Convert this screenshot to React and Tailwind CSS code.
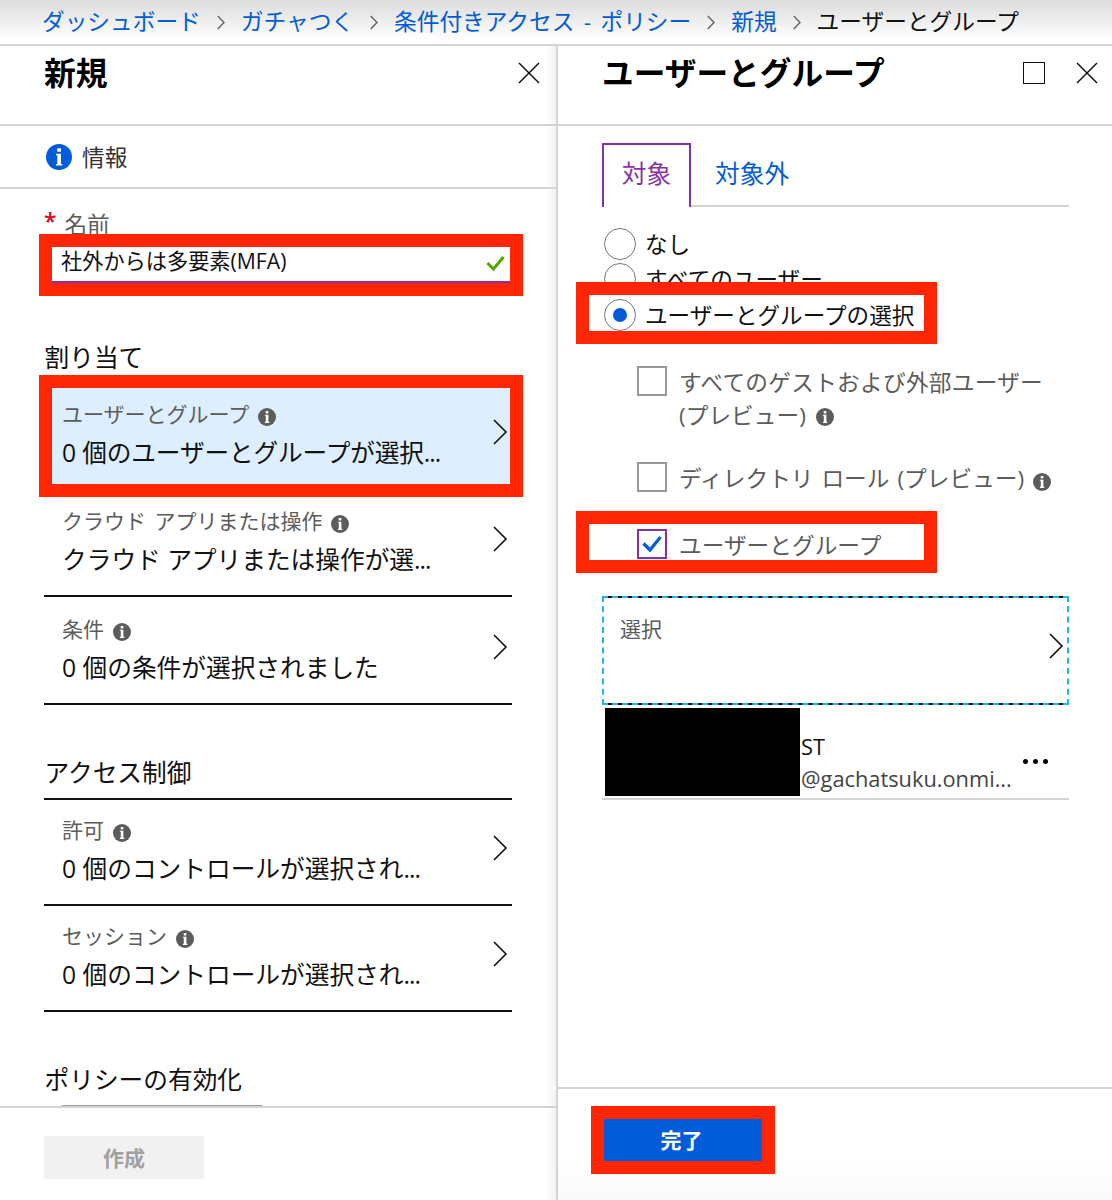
import React from "react";

const Chevron = ({ className = "" }) => (
  <svg className={className} width="15" height="26" viewBox="0 0 15 26" fill="none" stroke="#111" strokeWidth="1.6">
    <path d="M1 1 L13 13 L1 25" />
  </svg>
);

const Close = () => (
  <svg width="22" height="22" viewBox="0 0 22 22" fill="none" stroke="#111" strokeWidth="1.5">
    <path d="M1 1 L21 21 M21 1 L1 21" />
  </svg>
);

const Info = ({ size = 18, color = "#5c5c5c" }) => (
  <svg className="shrink-0" width={size} height={size} viewBox="0 0 18 18">
    <circle cx="9" cy="9" r="9" fill={color} />
    <rect x="7.7" y="3" width="2.7" height="2.4" rx="0.6" fill="#fff" />
    <path d="M6.9 6.7h3.5v7.1h0.9v1.1H6.9v-1.1h0.9V7.8H6.9z" fill="#fff" />
  </svg>
);

const Crumb = ({ children, last }) => (
  <span className={`whitespace-nowrap [word-spacing:3.5px] ${last ? "text-[#111]" : "text-[#015cda]"}`}>{children}</span>
);

const CrumbArrow = () => (
  <svg className="mx-4 shrink-0" width="8" height="15" viewBox="0 0 8 15" fill="none" stroke="#666" strokeWidth="1.5">
    <path d="M0.8 1 L7 7.5 L0.8 14" />
  </svg>
);

const Row = ({ label, value, height, active, more }) => (
  <div className={`flex shrink-0 border-b-2 border-[#111] ${height} ${active ? "bg-[#dceeff]" : ""}`}>
    <div className="flex flex-1 flex-col justify-end pb-[15px] pl-[18px]">
      <div className="flex h-9 items-center gap-[9px] text-[21px] leading-9 text-[#5c5c5c] [word-spacing:3px]">
        <span className="-mt-[2px]">{label}</span>
        <span className="mt-1"><Info /></span>
      </div>
      <div className="h-10 whitespace-nowrap text-[24.7px] leading-10 text-[#111]">
        <span className={active ? "tracking-[-0.15px]" : ""}>{value}</span>
        {more && <span className="tracking-[-1px]">...</span>}
      </div>
    </div>
    <div className="flex items-end pb-[43px] pr-1">
      <Chevron />
    </div>
  </div>
);

const Section = ({ children, className }) => (
  <h2 className={`shrink-0 pl-[0.5px] text-[24.7px] leading-9 text-[#111] ${className}`}>{children}</h2>
);

const Radio = ({ children, checked }) => (
  <label className="flex h-[35.5px] items-center gap-[9px] text-[22.6px] leading-9 text-[#111]">
    <span className="flex h-8 w-8 shrink-0 items-center justify-center rounded-full border-[1.5px] border-[#777] bg-white">
      {checked && <span className="h-[14px] w-[14px] rounded-full bg-[#015cda]" />}
    </span>
    <span className="pt-[2px]">{children}</span>
  </label>
);

const Check = ({ children, checked, className }) => (
  <label className={`flex items-start gap-3 text-[22.7px] leading-[33px] text-[#5c5c5c] ${className}`}>
    <span
      className={`flex h-[30px] w-[30px] shrink-0 items-center justify-center border-2 bg-white ${
        checked ? "border-[#8930a8]" : "border-[#999]"
      }`}
    >
      {checked && (
        <svg width="20" height="18" viewBox="0 0 20 18" fill="none" stroke="#015cda" strokeWidth="3.2">
          <path d="M1.5 8.5 L8 15 L18.5 2" />
        </svg>
      )}
    </span>
    <span className="whitespace-nowrap">{children}</span>
  </label>
);

const Mark = ({ className }) => (
  <div className={`pointer-events-none absolute border-[13px] border-[#ff2703] ${className}`} />
);

export default function App() {
  return (
    <div className="relative flex h-[1200px] w-[1112px] flex-col overflow-hidden bg-white font-['Open_Sans','Noto_Sans_CJK_JP',sans-serif]">
      <nav className="flex h-[46px] shrink-0 items-center border-b-2 border-[#d4d4d4] bg-linear-to-b from-[#dcdcdc] to-white to-90% pl-[42px] text-[22.7px] leading-[44px]">
        <Crumb>ダッシュボード</Crumb>
        <CrumbArrow />
        <Crumb>ガチャつく</Crumb>
        <CrumbArrow />
        <Crumb>条件付きアクセス - ポリシー</Crumb>
        <CrumbArrow />
        <Crumb>新規</Crumb>
        <CrumbArrow />
        <Crumb last>ユーザーとグループ</Crumb>
      </nav>

      <div className="flex min-h-0 flex-1">
        <section className="flex w-[558px] shrink-0 flex-col border-r-2 border-[#d4d4d4] bg-linear-to-l from-[#f3f3f3] to-white to-[10px]">
          <header className="flex h-[80px] shrink-0 justify-between border-b-2 border-[#d4d4d4] pl-11 pr-[16px]">
            <h1 className="text-[31.8px] font-bold leading-[54px] text-black">新規</h1>
            <div className="pt-[16px]"><Close /></div>
          </header>
          <div className="flex h-[63px] shrink-0 items-center gap-[10px] border-b-2 border-[#d4d4d4] pl-[46px] text-[22.7px] text-[#333]">
            <Info size={26} color="#015cda" />
            <span className="pt-[3px]">情報</span>
          </div>

          <div className="flex min-h-0 flex-1 flex-col overflow-hidden pl-11 pr-[44px]">
            <div className="mt-[18px] flex h-[34px] shrink-0 gap-[8px] text-[22.7px] leading-[36px] text-[#5c5c5c]">
              <span className="font-semibold leading-[30px] text-[#e3001b]">*</span>
              <span>名前</span>
            </div>
            <div className="flex h-[42px] shrink-0 items-center justify-between border-b-2 border-[#8930a8] pl-[17px] pr-[7px] text-[21.2px] text-[#111]">
              <span>社外からは多要素(MFA)</span>
              <svg className="mt-1" width="19" height="17" viewBox="0 0 19 17" fill="none" stroke="#57a300" strokeWidth="3">
                <path d="M1.5 8 L7.5 14 L17.5 2" />
              </svg>
            </div>

            <Section className="mt-[57px]">割り当て</Section>
            <div className="h-[8px] shrink-0" />
            <Row height="h-[106px]" active more label="ユーザーとグループ" value="0 個のユーザーとグループが選択" />
            <Row height="h-[107px]" more label="クラウド アプリまたは操作" value="クラウド アプリまたは操作が選" />
            <Row height="h-[108px]" label="条件" value="0 個の条件が選択されました" />
            <Section className="mt-[50px]">アクセス制御</Section>
            <div className="h-[9px] shrink-0 border-b-2 border-[#111]" />
            <Row height="h-[106px]" more label="許可" value="0 個のコントロールが選択され" />
            <Row height="h-[106px]" more label="セッション" value="0 個のコントロールが選択され" />
            <Section className="mt-[50px]">ポリシーの有効化</Section>
            <div className="ml-[14px] mt-[7px] h-8 w-[208px] shrink-0 rounded-[6px] border-2 border-[#999]" />
          </div>

          <footer className="h-[94px] shrink-0 border-t-2 border-[#d4d4d4] pl-11 pt-[28px]">
            <button className="h-[43px] w-[160px] bg-[#f1f1f1] text-[21px] font-bold leading-[44px] text-[#a0a0a0]">作成</button>
          </footer>
        </section>

        <section className="flex min-w-0 flex-1 flex-col">
          <header className="flex h-[80px] shrink-0 border-b-2 border-[#d4d4d4] pl-11">
            <h1 className="flex-1 text-[31.7px] font-bold leading-[54px] text-black">ユーザーとグループ</h1>
            <div className="flex gap-[31px] pr-[14px] pt-[16px]">
              <span className="h-[22px] w-[22px] border-[1.5px] border-[#111]" />
              <Close />
            </div>
          </header>

          <div className="flex min-h-0 flex-1 flex-col pl-11 pr-[43px]">
            <div className="mt-[17px] flex h-[64px] shrink-0 text-[24.7px] leading-[58px]">
              <span className="w-[89px] border-2 border-b-0 border-[#8930a8] text-center text-[#8930a8]">対象</span>
              <span className="flex-1 border-b-2 border-[#d4d4d4] pl-[24px] pt-[2px] text-[#015cda]">対象外</span>
            </div>

            <div className="mt-[19px] pl-[2px]">
              <Radio>なし</Radio>
              <Radio>すべてのユーザー</Radio>
              <Radio checked>ユーザーとグループの選択</Radio>
            </div>

            <div className="mt-[33px] flex flex-col pl-[35px]">
              <Check className="h-[96px]">
                <span className="tracking-[0.25px]">すべてのゲストおよび外部ユーザー</span>
                <span className="flex items-center gap-[10px]">(プレビュー)<span className="mt-1"><Info /></span></span>
              </Check>
              <Check className="h-[67px]">
                <span className="flex items-center gap-[9px] [word-spacing:2px]">ディレクトリ ロール (プレビュー)<span className="mt-[7px]"><Info /></span></span>
              </Check>
              <Check checked className="h-[67px]">ユーザーとグループ</Check>
            </div>

            <div className="flex h-[109px] shrink-0 items-center justify-between border-2 border-dashed border-[#1fb6ee] bg-[linear-gradient(#111_2px,#fff_2px,#fff_calc(100%-2px),#111_calc(100%-2px))] bg-origin-border pl-4 pr-[3px]">
              <span className="-mt-[42px] text-[21px] leading-9 text-[#5c5c5c]">選択</span>
              <Chevron className="-mt-2" />
            </div>

            <div className="flex h-[95px] shrink-0 border-b-2 border-[#d4d4d4] pl-[3px] pt-[3px]">
              <div className="h-[88px] w-[195px] shrink-0 bg-black" />
              <div className="flex flex-1 flex-col pl-px pt-[23px]">
                <span className="text-[21.8px] leading-8 text-[#111]">ST</span>
                <span className="text-[21.8px] leading-8 text-[#444]">@gachatsuku.onmi...</span>
              </div>
              <div className="flex gap-[5px] pr-[21px] pt-[51px]">
                <i className="h-[5px] w-[5px] rounded-full bg-black" />
                <i className="h-[5px] w-[5px] rounded-full bg-black" />
                <i className="h-[5px] w-[5px] rounded-full bg-black" />
              </div>
            </div>
          </div>

          <footer className="h-[113px] shrink-0 border-t-2 border-[#d4d4d4] bg-linear-to-b from-white from-60% to-[#fafafa] pl-[46px] pt-[30px]">
            <button className="h-[42px] w-[158px] bg-[#015cda] pr-[3px] text-[21px] font-bold leading-[43px] text-white">完了</button>
          </footer>
        </section>
      </div>

      <Mark className="left-[39px] top-[234px] h-[62px] w-[484px]" />
      <Mark className="left-[39px] top-[375px] h-[122px] w-[484px]" />
      <Mark className="left-[576px] top-[282px] h-[62px] w-[361px]" />
      <Mark className="left-[576px] top-[511px] h-[62px] w-[361px]" />
      <Mark className="left-[591px] top-[1106px] h-[68px] w-[184px]" />
    </div>
  );
}
